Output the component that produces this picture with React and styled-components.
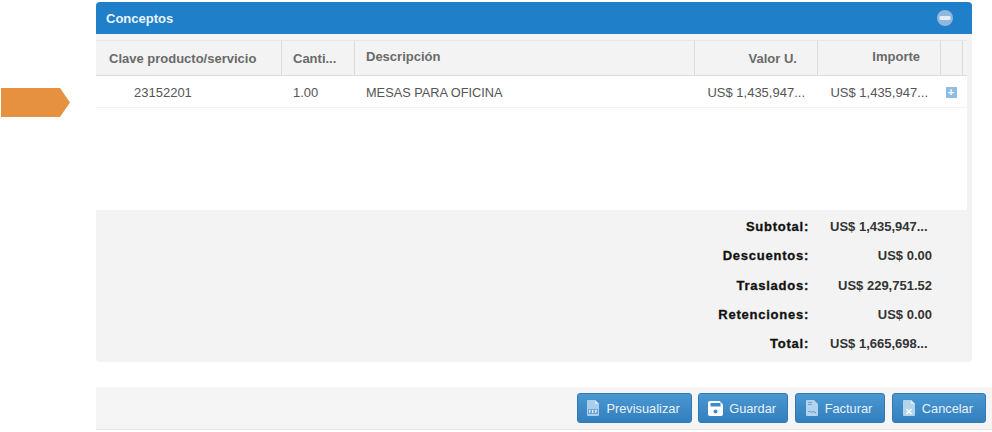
import React from 'react';
import styled, {createGlobalStyle} from 'styled-components';

const GlobalStyle = createGlobalStyle`
  html, body {
    margin: 0;
    padding: 0;
    background: #fff;
    font-family: "Liberation Sans", Arial, sans-serif;
  }
`;

const columns = '186px 73px 340px 123px 123px 22px 4px';

const rows = [
  {label: 'Subtotal:', value: 'US$ 1,435,947...', clipped: true},
  {label: 'Descuentos:', value: 'US$ 0.00'},
  {label: 'Traslados:', value: 'US$ 229,751.52'},
  {label: 'Retenciones:', value: 'US$ 0.00'},
  {label: 'Total:', value: 'US$ 1,665,698...', clipped: true},
];

const PdfIcon = () => (
  <svg width="12" height="16" viewBox="0 0 12 16">
    <path d="M1 0h7l4 4v11a1 1 0 0 1-1 1H1a1 1 0 0 1-1-1V1a1 1 0 0 1 1-1z" fill="#a9cdea"/>
    <path d="M8 0l4 4H8z" fill="#d7e8f6"/>
    <rect x="1" y="9" width="10" height="5" fill="#6ea7d6"/>
    <path d="M2 10h1.500v1.500H2.600V13H2zM5 10h1.300v3H5zM8 10h2v.8H8.800v.6H10v.7H8.800V13H8z" fill="#e4f0fa"/>
  </svg>
);

const SaveIcon = () => (
  <svg width="15" height="15" viewBox="0 0 15 15">
    <path d="M2 0h9.500L15 3.500V13a2 2 0 0 1-2 2H2a2 2 0 0 1-2-2V2a2 2 0 0 1 2-2z" fill="#fff"/>
    <rect x="2.500" y="2" width="10" height="3.500" fill="#3a8ccb"/>
    <circle cx="7.500" cy="10.500" r="2" fill="#3a8ccb"/>
  </svg>
);

const InvoiceIcon = () => (
  <svg width="12" height="16" viewBox="0 0 12 16">
    <path d="M1 0h7l4 4v11a1 1 0 0 1-1 1H1a1 1 0 0 1-1-1V1a1 1 0 0 1 1-1z" fill="#b4d4ee"/>
    <path d="M2 2h4v1H2zM2 4h4v1H2z" fill="#6ea7d6"/>
    <path d="M2 12c2-2 3 1 4 0s2 0 4 1" stroke="#4f92cb" strokeWidth="1" fill="none"/>
  </svg>
);

const CancelIcon = () => (
  <svg width="12" height="16" viewBox="0 0 12 16">
    <path d="M1 0h7l4 4v11a1 1 0 0 1-1 1H1a1 1 0 0 1-1-1V1a1 1 0 0 1 1-1z" fill="#b4d4ee"/>
    <path d="M8 0l4 4H8z" fill="#e0edf8"/>
    <path d="M3.500 9l5 5M8.500 9l-5 5" stroke="#fff" strokeWidth="1.600"/>
  </svg>
);

const MinusIcon = () => (
  <svg width="16" height="16" viewBox="0 0 16 16">
    <circle cx="8" cy="8" r="8" fill="#8fb8dc"/>
    <rect x="2.500" y="6" width="11" height="4" rx="1" fill="#e3edf5"/>
  </svg>
);

export default function App() {
  return (
    <>
      <GlobalStyle/>
      <Page>
        <Gutter>
          <Arrow/>
        </Gutter>
        <Main>
          <Panel>
            <PanelHeader>
              <PanelTitle>Conceptos</PanelTitle>
              <MinusIcon/>
            </PanelHeader>
            <Table>
              <HeadRow>
                <HeadCell $first>Clave producto/servicio</HeadCell>
                <HeadCell>Canti...</HeadCell>
                <HeadCell $raised>Descripción</HeadCell>
                <HeadCell $right>Valor U.</HeadCell>
                <HeadCell $right $raised>Importe</HeadCell>
                <HeadCell/>
              </HeadRow>
              <BodyRow>
                <Cell $indent>23152201</Cell>
                <Cell>1.00</Cell>
                <Cell $narrow>MESAS PARA OFICINA</Cell>
                <Cell $right>US$ 1,435,947...</Cell>
                <Cell $right>US$ 1,435,947...</Cell>
                <PlusCell><PlusBox>+</PlusBox></PlusCell>
              </BodyRow>
              <EmptyArea/>
            </Table>
            <Totals>
              {rows.map(row => (
                <TotalRow key={row.label}>
                  <TotalLabel>{row.label}</TotalLabel>
                  <TotalValue $clipped={row.clipped}>{row.value}</TotalValue>
                </TotalRow>
              ))}
            </Totals>
          </Panel>
          <Footer>
            <Button $tight><PdfIcon/>Previsualizar</Button>
            <Button $tight $gap="6px"><SaveIcon/>Guardar</Button>
            <Button><InvoiceIcon/>Facturar</Button>
            <Button><CancelIcon/>Cancelar</Button>
          </Footer>
        </Main>
      </Page>
    </>
  );
}

const Page = styled.div`
  display: grid;
  grid-template-columns: 96px 896px;
  width: 992px;
  height: 432px;
  overflow: hidden;
`;
const Gutter = styled.div`
  padding: 88px 0 0 1px;
`;
const Arrow = styled.div`
  width: 69px;
  height: 29px;
  background: #e59140;
  clip-path: polygon(0 0, 59px 0, 100% 50%, 59px 100%, 0 100%);
`;
const Main = styled.div`
  display: flex;
  flex-direction: column;
  padding-top: 2px;
`;
const Panel = styled.div`
  width: 876px;
  height: 360px;
  display: flex;
  flex-direction: column;
  background: #f3f3f3;
  border-radius: 4px;
  overflow: hidden;
`;
const PanelHeader = styled.div`
  height: 32px;
  flex: none;
  display: flex;
  align-items: center;
  justify-content: space-between;
  padding: 0 19px 0 10px;
  background: #1f7fc9;
`;
const PanelTitle = styled.div`
  color: #eaf4fb;
  font-size: 13px;
  font-weight: bold;
`;
const Table = styled.div`
  width: 871px;
  margin-top: 6px;
  display: flex;
  flex-direction: column;
  background: #fff;
`;
const HeadRow = styled.div`
  display: grid;
  grid-template-columns: ${columns};
  height: 36px;
  background: #f3f3f3;
  border-top: 1px solid #e8e8e8;
  border-bottom: 1px solid #dcdcdc;
  box-sizing: border-box;
`;
const HeadCell = styled.div`
  display: flex;
  align-items: center;
  justify-content: ${p => (p.$right ? 'flex-end' : 'flex-start')};
  padding-left: ${p => (p.$right ? '0' : p.$first ? '13px' : '11px')};
  padding-right: ${p => (p.$right ? '20px' : '0')};
  padding-bottom: ${p => (p.$raised ? '3px' : '0')};
  border-right: 1px solid #dcdcdc;
  color: #6a6a6a;
  font-size: 13px;
  font-weight: bold;
`;
const BodyRow = styled.div`
  display: grid;
  grid-template-columns: ${columns};
  height: 32px;
  padding-top: 1px;
  border-bottom: 1px solid #f3f3f3;
  box-sizing: border-box;
`;
const Cell = styled.div`
  display: flex;
  align-items: center;
  justify-content: ${p => (p.$right ? 'flex-end' : 'flex-start')};
  padding: ${p => (p.$indent ? '0 0 0 38px' : p.$right ? '0 13px 0 0' : '0 0 0 11px')};
  color: #555;
  font-size: ${p => (p.$narrow ? '12.75px' : '13px')};
`;
const PlusCell = styled.div`
  display: flex;
  align-items: center;
  justify-content: center;
  padding-right: 2px;
`;
const PlusBox = styled.div`
  width: 11px;
  height: 11px;
  background: #8dbde4;
  color: #fff;
  font-size: 11px;
  font-weight: bold;
  line-height: 11px;
  text-align: center;
`;
const EmptyArea = styled.div`
  height: 102px;
`;
const Totals = styled.div`
  flex: 1;
  display: flex;
  flex-direction: column;
  padding-top: 2px;
`;
const TotalRow = styled.div`
  display: grid;
  grid-template-columns: 713px 114px;
  column-gap: 9px;
  height: 29.3px;
  align-items: center;
`;
const TotalLabel = styled.div`
  color: #111;
  font-size: 13px;
  font-weight: bold;
  text-align: right;
  letter-spacing: 0.75px;
  -webkit-text-stroke: 0.3px #111;
`;
const TotalValue = styled.div`
  color: #333;
  font-size: 13px;
  font-weight: bold;
  white-space: nowrap;
  text-align: ${p => (p.$clipped ? 'left' : 'right')};
  padding-left: ${p => (p.$clipped ? '12px' : '0')};
`;
const Footer = styled.div`
  margin-top: 25px;
  height: 43px;
  box-sizing: border-box;
  display: flex;
  align-items: center;
  justify-content: flex-end;
  gap: 6.5px;
  padding-right: 6px;
  background: #f5f5f5;
  border-bottom: 1px solid #e6e6e6;
`;
const Button = styled.div`
  height: 30px;
  box-sizing: border-box;
  display: flex;
  align-items: center;
  gap: ${p => p.$gap || '7px'};
  padding: ${p => (p.$tight ? '0 11px 0 9px' : '0 12px 0 10px')};
  background: linear-gradient(#4a97d2, #327fbd);
  border: 1px solid #2f7ab6;
  border-radius: 3px;
  color: #e8f2fa;
  font-size: 12.8px;
`;
